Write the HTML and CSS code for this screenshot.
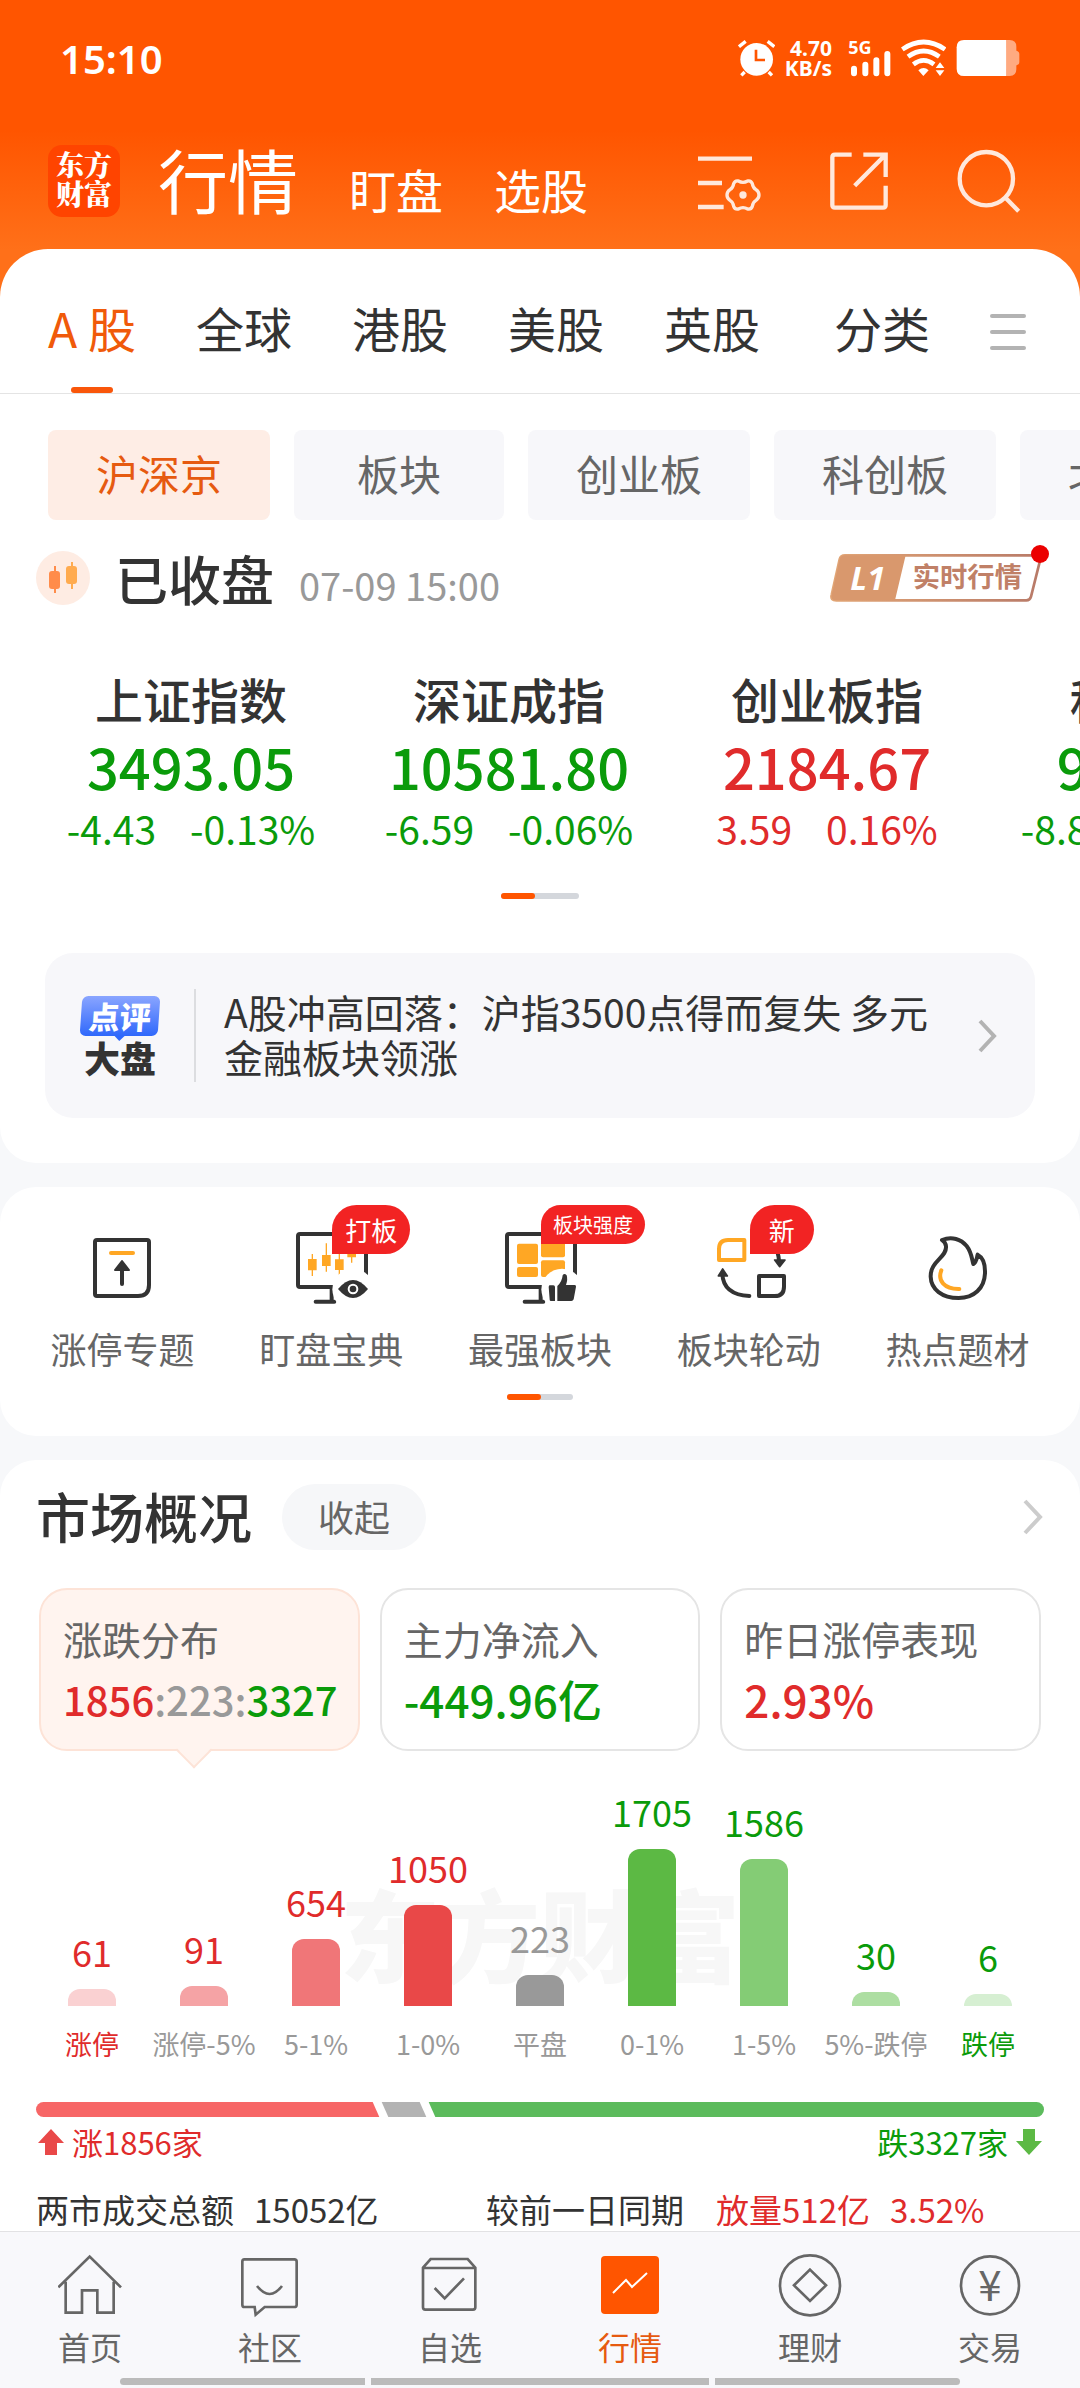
FILE: index.html
```html
<!DOCTYPE html>
<html lang="zh-CN">
<head>
    <meta charset="UTF-8">
    <meta name="viewport" content="width=device-width, initial-scale=1.0">
    <title>行情</title>
    <link rel="stylesheet" href="styles.css">
</head>
<body>
    <header class="header">
        <div class="status-bar">
            <div class="time">15:10</div>
            <div class="status-icons">
                <svg class="alarm" viewBox="174 120 111 114">
                    <circle cx="230" cy="181" r="49" fill="#fff"/>
                    <path d="M177 143l20-16M283 143l-20-16M194 219l-10 10M266 219l10 10" stroke="#fff" stroke-width="10" fill="none"/>
                    <path d="M228 152v31h27" stroke="#ff5500" stroke-width="8" fill="none"/>
                </svg>
                <div class="speed">4.70<br>KB/s</div>
                <svg class="signal" viewBox="510 120 129 114">
                    <text x="511" y="164" class="net-type">5G</text>
                    <path d="M528 209v14M562 197v26M595 184v39M628 165v58" stroke="#fff" stroke-width="18" stroke-linecap="round"/>
                </svg>
                <svg class="wifi" viewBox="669 120 135 114">
                    <g fill="none" stroke="#fff" stroke-width="14">
                        <path d="M673 151q64-44 128 0M690 173q47-34 94 0M706 196q31-24 62 0"/>
                    </g>
                    <path d="M721 214q16-14 31 0l-16 17zM773 207l13-17 13 17zM773 214l13 17 13-17z" fill="#fff"/>
                </svg>
                <svg class="battery" viewBox="830 120 192 114">
                    <path d="M981 123h10q20 0 20 20v12q9 2 9 10v24q0 8-9 10v12q0 20-20 20h-10z" fill="#ffaa80"/>
                    <path d="M981 123H854q-22 0-22 22v64q0 22 22 22h127z" fill="#fff"/>
                </svg>
            </div>
        </div>
        <div class="title-bar">
            <div class="logo">东方<br>财富</div>
            <nav class="title-nav">
                <a href="#" class="current">行情</a>
                <a href="#">盯盘</a>
                <a href="#">选股</a>
            </nav>
            <div class="tools">
                <button aria-label="设置">
                    <svg viewBox="54 441 192 192" fill="none" stroke="#ffe8dc" stroke-width="13">
                        <path d="M57 470h162M57 543h72M57 615h77"/>
                        <path d="M178 537q14 8 28 0 10-2 14 8 2 13 11 18 9 6 9 16t-9 16q-9 5-11 18-4 10-14 8-14-8-28 0-10 2-14-8-2-13-11-18-9-6-9-16t9-16q9-5 11-18 4-10 14-8z" stroke-width="10"/>
                        <circle cx="192" cy="579" r="11" fill="#ffe8dc" stroke="none"/>
                    </svg>
                </button>
                <button aria-label="分享">
                    <svg viewBox="438 446 192 192" fill="none" stroke="#ffe8dc" stroke-width="13">
                        <path d="M512 463h-50q-8 0-8 8v143q0 8 8 8h144q8 0 8-8v-58M547 463h67v67M612 465l-91 91"/>
                    </svg>
                </button>
                <button aria-label="搜索">
                    <svg viewBox="833 445 192 192" fill="none" stroke="#ffe8dc" stroke-width="13">
                        <circle cx="921" cy="534" r="80"/>
                        <path d="M977 590l41 42"/>
                    </svg>
                </button>
            </div>
        </div>
    </header>

    <main>
        <section class="panel market-panel">
            <div class="tab-bar">
                <nav class="tabs">
                    <a href="#" class="active">A 股</a>
                    <a href="#">全球</a>
                    <a href="#">港股</a>
                    <a href="#">美股</a>
                    <a href="#">英股</a>
                </nav>
                <a href="#" class="category">分类</a>
                <button class="menu" aria-label="菜单"><span></span><span></span><span></span></button>
            </div>

            <div class="chips">
                <button class="active">沪深京</button>
                <button>板块</button>
                <button>创业板</button>
                <button>科创板</button>
                <button>北交所</button>
            </div>

            <div class="session">
                <svg class="session-icon" viewBox="0 0 54 54">
                    <circle cx="27" cy="27" r="27" fill="#feece3"/>
                    <path d="M19 15v27" stroke="#ff8c4a" stroke-width="2"/>
                    <rect x="13" y="20" width="11" height="18" rx="3" fill="#ff8c4a"/>
                    <path d="M36 11v27" stroke="#ffab4f" stroke-width="2"/>
                    <rect x="30" y="15" width="11" height="18" rx="3" fill="#ffab4f"/>
                </svg>
                <h2>已收盘</h2>
                <span class="session-time">07-09 15:00</span>
                <a href="#" class="level-link">
                    <svg viewBox="30 42 663 177">
                        <defs>
                            <linearGradient id="bronze" x1="0" x2="1">
                                <stop offset="0" stop-color="#e2a676"/>
                                <stop offset="1" stop-color="#b87a68"/>
                            </linearGradient>
                        </defs>
                        <path d="M78 76H655q12 0 9 12L636 200q-3 11-14 11H52q-18 0-14-16L62 88q3-12 16-12z" fill="#fff" stroke="url(#bronze)" stroke-width="8"/>
                        <path d="M78 76H260L228 211H52q-18 0-14-16L62 88q3-12 16-12z" fill="#d9986d"/>
                        <text x="94" y="180" class="level-tag">L1</text>
                        <text x="281" y="172" class="level-text">实时行情</text>
                        <circle cx="663" cy="72" r="27" fill="#eb0000"/>
                    </svg>
                </a>
            </div>

            <div class="indices">
                <div class="index down">
                    <h3>上证指数</h3>
                    <div class="value">3493.05</div>
                    <div class="change"><span>-4.43</span><span>-0.13%</span></div>
                </div>
                <div class="index down">
                    <h3>深证成指</h3>
                    <div class="value">10581.80</div>
                    <div class="change"><span>-6.59</span><span>-0.06%</span></div>
                </div>
                <div class="index up">
                    <h3>创业板指</h3>
                    <div class="value">2184.67</div>
                    <div class="change"><span>3.59</span><span>0.16%</span></div>
                </div>
                <div class="index down">
                    <h3>科创50</h3>
                    <div class="value">984.95</div>
                    <div class="change"><span>-8.89</span><span>-0.89%</span></div>
                </div>
            </div>
            <div class="pager"><span></span></div>

            <a href="#" class="comment">
                <div class="comment-logo">
                    <span class="bubble">点评</span>
                    <span class="word">大盘</span>
                </div>
                <p>A股冲高回落：沪指3500点得而复失 多元金融板块领涨</p>
                <svg class="chevron" viewBox="0 0 22 36"><path d="M3 3l14 15L3 33"/></svg>
            </a>
        </section>

        <section class="panel quick-panel">
            <div class="quick-list">
                <a href="#" class="quick">
                    <div class="quick-icon">
                        <svg viewBox="0 0 80 80" fill="none" stroke="#333" stroke-width="4">
                            <path d="M15 13h50q2 0 2 2v43q0 11-11 11H15q-2 0-2-2V15q0-2 2-2z"/>
                            <path d="M29 26h22" stroke="#ffa724" stroke-linecap="round"/>
                            <path d="M40 57V38" stroke-linecap="round"/>
                            <path d="M40 34l7 9H33z" fill="#333" stroke-width="2" stroke-linejoin="round"/>
                        </svg>
                    </div>
                    <span>涨停专题</span>
                </a>
                <a href="#" class="quick">
                    <div class="quick-icon">
                        <svg viewBox="30 111 240 240">
                            <rect x="51" y="132" width="204" height="159" rx="6" fill="none" stroke="#333" stroke-width="12"/>
                            <path d="M104 335h56M152 291v44" stroke="#333" stroke-width="12" stroke-linecap="round"/>
                            <path d="M94 192v66M136 160v85M175 190v71M212 150v68" stroke="#ffa724" stroke-width="4"/>
                            <path d="M81 207h26v34H81zM123 195h26v33h-26zM162 208h26v32h-26zM199 170h26v32h-26z" fill="#ffa724"/>
                            <circle cx="216" cy="298" r="62" fill="#fff"/>
                            <path d="M171 297q45-54 90 0-45 54-90 0z" fill="#333"/>
                            <circle cx="216" cy="297" r="13" fill="#333" stroke="#fff" stroke-width="6"/>
                        </svg>
                        <span class="badge">打板</span>
                    </div>
                    <span>盯盘宝典</span>
                </a>
                <a href="#" class="quick">
                    <div class="quick-icon">
                        <svg viewBox="657 111 240 240">
                            <rect x="678" y="132" width="204" height="159" rx="6" fill="none" stroke="#333" stroke-width="12"/>
                            <path d="M731 335h56M779 291v44" stroke="#333" stroke-width="12" stroke-linecap="round"/>
                            <g fill="#ffa724">
                                <rect x="708" y="161" width="63" height="61" rx="6"/>
                                <rect x="780" y="150" width="72" height="52" rx="6"/>
                                <rect x="708" y="231" width="63" height="30" rx="6"/>
                                <rect x="780" y="211" width="72" height="50" rx="6"/>
                            </g>
                            <circle cx="843" cy="298" r="62" fill="#fff"/>
                            <path d="M805 286h12q5 0 5 5v42h-12q-4 0-4-4l-3-39zM829 333v-45q14-12 16-32 5-8 12 0 4 12-2 29h26q5 0 4 5l-7 38q-2 5-7 5z" fill="#333"/>
                        </svg>
                        <span class="badge small">板块强度</span>
                    </div>
                    <span>最强板块</span>
                </a>
                <a href="#" class="quick">
                    <div class="quick-icon">
                        <svg viewBox="84 111 240 240" fill="none" stroke="#333" stroke-width="12" stroke-linejoin="round">
                            <path d="M114 210v-33q0-27 27-27h49v60z" stroke="#ffa724"/>
                            <path d="M234 258h75v32q0 28-28 28h-47z"/>
                            <path d="M205 318q-78-4-81-66" stroke-linecap="round"/>
                            <path d="M125 237l14 21h-27zM296 230l-15-20h31z" fill="#333" stroke-width="5"/>
                            <path d="M282 170q10 16 12 42"/>
                        </svg>
                        <span class="badge single">新</span>
                    </div>
                    <span>板块轮动</span>
                </a>
                <a href="#" class="quick">
                    <div class="quick-icon">
                        <svg viewBox="711 111 240 240" fill="none" stroke="#333" stroke-width="12" stroke-linejoin="round" stroke-linecap="round">
                            <path d="M783 150c30-12 57-2 74 18 14 18 15 35 20 54 10-6 10-18 13-28 17 9 23 29 22 56-2 45-33 74-79 74-50 0-83-26-84-64-1-48 49-57 46-91-1-9-5-15-12-19z"/>
                            <path d="M781 241c-12 31 9 57 54 56" stroke="#ffa724"/>
                        </svg>
                    </div>
                    <span>热点题材</span>
                </a>
            </div>
            <div class="pager short"><span></span></div>
        </section>

        <section class="panel overview">
            <div class="overview-head">
                <h2>市场概况</h2>
                <button>收起</button>
                <svg class="chevron" viewBox="0 0 22 36"><path d="M3 2l15 16L3 34"/></svg>
            </div>

            <div class="cards">
                <div class="card active">
                    <div class="card-label">涨跌分布</div>
                    <div class="card-value ratio"><span class="up">1856</span><span class="flat">:223:</span><span class="down">3327</span></div>
                </div>
                <div class="card">
                    <div class="card-label">主力净流入</div>
                    <div class="card-value down">-449.96亿</div>
                </div>
                <div class="card">
                    <div class="card-label">昨日涨停表现</div>
                    <div class="card-value up">2.93%</div>
                </div>
            </div>

            <div class="chart">
                <div class="watermark">东方财富</div>
                <div class="col up"><b>61</b><i class="r1" style="height: 17px"></i><span>涨停</span></div>
                <div class="col up"><b>91</b><i class="r2" style="height: 20px"></i><span class="flat">涨停-5%</span></div>
                <div class="col up"><b>654</b><i class="r3" style="height: 67px"></i><span class="flat">5-1%</span></div>
                <div class="col up"><b>1050</b><i class="r4" style="height: 101px"></i><span class="flat">1-0%</span></div>
                <div class="col flat"><b>223</b><i class="g0" style="height: 31px"></i><span>平盘</span></div>
                <div class="col down"><b>1705</b><i class="g4" style="height: 157px"></i><span class="flat">0-1%</span></div>
                <div class="col down"><b>1586</b><i class="g3" style="height: 147px"></i><span class="flat">1-5%</span></div>
                <div class="col down"><b>30</b><i class="g2" style="height: 14px"></i><span class="flat">5%-跌停</span></div>
                <div class="col down"><b>6</b><i class="g1" style="height: 12px"></i><span>跌停</span></div>
            </div>

            <div class="ratio-bar">
                <span class="ratio-up" style="flex-grow: 1856"></span>
                <span class="ratio-flat"></span>
                <span class="ratio-down" style="flex-grow: 3327"></span>
            </div>
            <div class="ratio-text">
                <span class="up"><svg viewBox="0 0 26 26"><path d="M13 0l13 14h-7v12H7V14H0z" fill="#e94848"/></svg>涨1856家</span>
                <span class="down">跌3327家<svg viewBox="0 0 26 26"><path d="M13 26l13-14h-7V0H7v12H0z" fill="#5cb944"/></svg></span>
            </div>

            <div class="turnover">
                <div><span>两市成交总额</span><span>15052亿</span></div>
                <div><span class="wide">较前一日同期</span><span class="up">放量512亿</span><span class="up">3.52%</span></div>
            </div>
        </section>
    </main>

    <footer class="bottom">
        <nav class="bottom-nav">
            <a href="#">
                <svg viewBox="174 72 192 192"><path d="M175 172l94-92 94 92M197 155v93h49v-67h46v67h49v-93"/></svg>
                首页
            </a>
            <a href="#">
                <svg viewBox="714 72 192 192"><path d="M733 88h150q7 0 7 7v129q0 7-7 7h-89l-27 23-3-23h-31q-6 0-6-7V95q0-7 6-7z"/><path d="M771 168q38 48 75 0"/></svg>
                社区
            </a>
            <a href="#">
                <svg viewBox="1254 72 192 192"><path d="M1269 113l23-26h111l23 26v119q0 7-7 7h-143q-7 0-7-7zM1269 114h157M1304 174l30 31 58-60"/></svg>
                自选
            </a>
            <a href="#" class="active">
                <svg viewBox="0 0 64 64"><rect x="3" y="2" width="58" height="58" rx="4" fill="#ff5500" stroke="none"/><path d="M15 39l13-13 6 7 15-14" stroke="#fff" stroke-width="2"/></svg>
                行情
            </a>
            <a href="#">
                <svg viewBox="0 0 192 192"><circle cx="96" cy="94" r="90"/><path d="M96 47l48 47-48 47-48-47z"/></svg>
                理财
            </a>
            <a href="#">
                <svg viewBox="0 0 192 192"><circle cx="96" cy="94" r="87"/><text x="96" y="140" class="yen">¥</text></svg>
                交易
            </a>
        </nav>
        <div class="home-bar"><span></span><span class="mid"></span><span></span></div>
    </footer>
</body>
</html>
```
FILE: styles.css
```css
* {
    margin: 0;
    padding: 0;
    box-sizing: border-box;
}
body {
    display: flex;
    flex-direction: column;
    min-height: 100vh;
    overflow-x: hidden;
    font-family: "Noto Sans CJK SC", sans-serif;
    color: #333;
    background-color: #f7f8fa;
}
a {
    color: inherit;
    text-decoration: none;
}
button {
    font-family: inherit;
    color: inherit;
    background: none;
    border: none;
    cursor: pointer;
}
svg {
    display: block;
}
.up {
    color: #e02b2b;
}
.down {
    color: #0a9b0a;
}
.flat {
    color: #999;
}

/* 顶部 */
.header {
    padding-bottom: 48px;
    background: linear-gradient(#ff5500 130px, #ff7019 250px);
    color: #fff;
}
.status-bar {
    display: flex;
    justify-content: space-between;
    align-items: center;
    height: 116px;
    padding: 0 60px;
}
.time {
    font-family: "Noto Sans", sans-serif;
    font-size: 40px;
    font-weight: 600;
}
.status-icons {
    display: flex;
    align-items: center;
    gap: 10px;
}
.status-icons svg {
    height: 38px;
}
.alarm {
    width: 37px;
}
.speed {
    margin-right: 6px;
    font-family: "Noto Sans", sans-serif;
    font-size: 21px;
    line-height: 20px;
    font-weight: 700;
    text-align: right;
}
.signal {
    width: 43px;
}
.net-type {
    font-family: "Noto Sans", sans-serif;
    font-size: 54px;
    font-weight: 700;
    fill: #fff;
}
.wifi {
    width: 45px;
}
.battery {
    width: 64px;
}
.title-bar {
    display: flex;
    align-items: center;
    height: 133px;
    padding: 0 59px 3px 48px;
}
.logo {
    width: 72px;
    height: 72px;
    padding-top: 5px;
    border-radius: 14px;
    background-color: #ff4400;
    font-family: "Noto Serif CJK SC", "Noto Sans CJK SC", serif;
    font-size: 28px;
    line-height: 29px;
    font-weight: 900;
    text-align: center;
}
.title-nav {
    display: flex;
    align-items: baseline;
    gap: 51px;
    margin-left: 38px;
    font-size: 47px;
}
.title-nav .current {
    font-size: 70px;
    line-height: 80px;
}
.tools {
    display: flex;
    gap: 66px;
    margin-left: auto;
}
.tools svg {
    width: 64px;
    height: 64px;
}

/* 行情面板 */
.panel {
    margin-bottom: 24px;
    border-radius: 36px;
    background-color: #fff;
    overflow: hidden;
}
.market-panel {
    margin-top: -48px;
    padding-bottom: 45px;
    border-radius: 48px 48px 36px 36px;
}
.tab-bar {
    display: flex;
    align-items: center;
    height: 145px;
    padding: 0 54px 0 48px;
    border-bottom: 1px solid #e4e4e4;
    font-size: 48px;
}
.tabs {
    display: flex;
    gap: 60px;
}
.tabs a,
.tab-bar .category {
    position: relative;
    padding: 20px 0 8px;
    line-height: 116px;
    white-space: nowrap;
}
.tab-bar .category {
    margin-left: auto;
}
.tabs .active {
    color: #f05a0a;
}
.tabs .active::after {
    content: "";
    position: absolute;
    left: 50%;
    bottom: 0;
    width: 42px;
    height: 6px;
    margin-left: -21px;
    border-radius: 3px;
    background-color: #f9560a;
}
.menu {
    display: flex;
    flex-direction: column;
    gap: 12px;
    width: 36px;
    margin: 22px 0 0 60px;
}
.menu span {
    height: 4px;
    border-radius: 2px;
    background-color: #b3b3b3;
}
.chips {
    display: flex;
    gap: 24px;
    padding: 36px 0 0 48px;
    overflow: hidden;
}
.chips button {
    flex-shrink: 0;
    min-width: 210px;
    height: 90px;
    padding: 0 48px 5px;
    border-radius: 8px;
    background-color: #f7f7fa;
    font-size: 42px;
    color: #666;
}
.chips .active {
    background-color: #feede5;
    color: #e65a10;
}
.session {
    display: flex;
    align-items: center;
    height: 54px;
    margin-top: 31px;
    padding: 0 30px 0 36px;
}
.session-icon {
    width: 54px;
    height: 54px;
}
.session h2 {
    margin-left: 25px;
    font-size: 53px;
    font-weight: 500;
}
.session-time {
    margin: 12px 0 0 25px;
    font-size: 38px;
    color: #999;
}
.level-link {
    margin: 0 0 9px auto;
}
.level-link svg {
    width: 221px;
    height: 59px;
}
.level-tag {
    font-family: "Open Sans", sans-serif;
    font-size: 98px;
    font-weight: 700;
    font-style: italic;
    fill: #fff;
}
.level-text {
    font-size: 82px;
    font-weight: 700;
    fill: #c08067;
}
.indices {
    display: flex;
    margin: 63px 0 0 32px;
    overflow: hidden;
}
.index {
    display: flex;
    flex-direction: column;
    flex: 0 0 318px;
    align-items: center;
    gap: 6px;
}
.index h3 {
    font-size: 48px;
    line-height: 60px;
    font-weight: 500;
    color: #333;
}
.value {
    font-size: 56px;
    line-height: 64px;
    font-weight: 500;
}
.change {
    display: flex;
    gap: 34px;
    font-size: 39px;
    line-height: 48px;
}
.pager {
    width: 78px;
    height: 6px;
    margin: 41px auto 0;
    border-radius: 3px;
    background-color: #d4d7dc;
}
.pager span {
    display: block;
    width: 34px;
    height: 6px;
    border-radius: 3px;
    background-color: #ff5500;
}
.pager.short {
    width: 66px;
    margin-top: 22px;
}
.comment {
    display: flex;
    align-items: center;
    margin: 54px 45px 0;
    padding: 36px 36px 36px 34px;
    border-radius: 28px;
    background-color: #f7f7fa;
}
.comment-logo {
    display: flex;
    flex-direction: column;
    flex-shrink: 0;
    width: 82px;
    height: 80px;
    text-align: center;
    font-weight: 900;
}
.bubble {
    position: relative;
    margin: 0 2px 6px;
    border-radius: 6px;
    background: linear-gradient(#8aa5ff, #2f68fb);
    font-size: 31px;
    line-height: 40px;
    color: #fff;
    transform: skewX(-4deg);
}
.bubble::after {
    content: "";
    position: absolute;
    left: 35px;
    top: 40px;
    border: 5px solid transparent;
    border-top-color: #2f68fb;
}
.word {
    font-size: 36px;
    line-height: 30px;
}
.comment p {
    flex: 1;
    margin-left: 33px;
    padding: 0 28px 3px 28px;
    border-left: 2px solid #dcdde0;
    font-size: 39px;
    line-height: 45px;
}
.chevron {
    flex-shrink: 0;
    width: 22px;
    height: 36px;
    fill: none;
    stroke: #b3b3b3;
    stroke-width: 4;
}

/* 快捷入口 */
.quick-panel {
    padding: 40px 18px 36px;
}
.quick-list {
    display: grid;
    grid-template-columns: repeat(5, 1fr);
}
.quick {
    display: flex;
    flex-direction: column;
    align-items: center;
    gap: 17px;
    font-size: 36px;
    line-height: 48px;
    color: #666;
}
.quick-icon {
    position: relative;
    width: 80px;
    height: 80px;
}
.badge {
    position: absolute;
    left: 41px;
    top: -22px;
    padding: 0 13px;
    border-radius: 25px 25px 25px 0;
    background-color: #f22323;
    font-size: 26px;
    line-height: 49px;
    color: #fff;
    white-space: nowrap;
}
.badge.small {
    padding: 0 12px;
    font-size: 20px;
    line-height: 39px;
}
.badge.single {
    padding: 0 19px;
}

/* 市场概况 */
.overview {
    margin-bottom: 0;
    padding: 24px 36px 4px;
    border-radius: 36px 36px 0 0;
}
.overview-head {
    display: flex;
    align-items: center;
    height: 66px;
}
.overview-head h2 {
    padding-bottom: 4px;
    font-size: 54px;
    font-weight: 500;
}
.overview-head button {
    width: 144px;
    height: 66px;
    padding-bottom: 3px;
    margin-left: 30px;
    border-radius: 33px;
    background-color: #f6f7f9;
    font-size: 36px;
    color: #666;
}
.overview-head .chevron {
    margin-left: auto;
    stroke: #ccc;
}
.cards {
    display: grid;
    grid-template-columns: repeat(3, 1fr);
    gap: 20px;
    margin: 38px 3px 0;
}
.card {
    position: relative;
    padding: 23px 0 22px 22px;
    border: 2px solid #e5e5e5;
    border-radius: 28px;
    white-space: nowrap;
}
.card.active {
    border-color: #fde3d7;
    background-color: #fff4ef;
}
.card.active::after {
    content: "";
    position: absolute;
    left: 140px;
    bottom: -14px;
    width: 24px;
    height: 24px;
    border: solid #fde3d7;
    border-width: 0 2px 2px 0;
    background: linear-gradient(135deg, transparent 50%, #fff4ef 50%);
    transform: rotate(45deg);
}
.card-label {
    font-size: 39px;
    line-height: 50px;
    color: #666;
}
.card-value {
    margin-top: 8px;
    font-size: 44px;
    line-height: 56px;
    font-weight: 500;
}
.card-value.ratio {
    font-size: 40px;
}
.chart {
    position: relative;
    display: grid;
    grid-template-columns: repeat(9, 1fr);
    align-items: end;
    margin-top: 40px;
}
.watermark {
    position: absolute;
    left: 50%;
    bottom: 74px;
    transform: translateX(-50%);
    font-size: 100px;
    line-height: 112px;
    font-weight: 900;
    color: #f7f7f7;
    white-space: nowrap;
}
.col {
    position: relative;
    display: flex;
    flex-direction: column;
    align-items: center;
}
.col b {
    margin-bottom: 18px;
    font-size: 36px;
    line-height: 40px;
    font-weight: 400;
}
.col i {
    width: 48px;
    border-radius: 12px 12px 0 0;
}
.col span {
    margin-top: 20px;
    font-size: 27px;
    line-height: 36px;
    white-space: nowrap;
}
.r1 { background-color: #fad1d2; }
.r2 { background-color: #f5a3a5; }
.r3 { background-color: #f07678; }
.r4 { background-color: #e94848; }
.g0 { background-color: #999; }
.g1 { background-color: #d6efd2; }
.g2 { background-color: #addea2; }
.g3 { background-color: #84cc75; }
.g4 { background-color: #5cb944; }
.ratio-bar {
    display: flex;
    gap: 9px;
    height: 15px;
    margin-top: 40px;
    border-radius: 8px;
    overflow: hidden;
}
.ratio-bar span {
    transform: skewX(24deg);
}
.ratio-up {
    margin-left: -8px;
    background-color: #f76666;
}
.ratio-flat {
    flex: 0 0 38px;
    background-color: #b3b3b3;
}
.ratio-down {
    margin-right: -12px;
    background-color: #5cbb5c;
}
.ratio-text {
    display: flex;
    justify-content: space-between;
    margin-top: 5px;
    font-size: 31px;
    line-height: 40px;
}
.ratio-text span {
    display: flex;
    align-items: center;
    gap: 8px;
    padding: 0 2px;
}
.ratio-text svg {
    width: 26px;
    height: 26px;
}
.turnover {
    display: grid;
    grid-template-columns: 450px 1fr;
    margin-top: 29px;
    font-size: 33px;
    line-height: 36px;
    white-space: nowrap;
}
.turnover div {
    display: flex;
    gap: 20px;
}
.turnover .wide {
    margin-right: 12px;
}

/* 底部导航 */
.bottom {
    position: sticky;
    bottom: 0;
    margin-top: auto;
    padding: 22px 0 3px;
    border-top: 1px solid #e2e2e4;
    background-color: #f8f8fb;
}
.bottom-nav {
    display: grid;
    grid-template-columns: repeat(6, 1fr);
}
.bottom-nav a {
    display: flex;
    flex-direction: column;
    align-items: center;
    gap: 8px;
    font-size: 32px;
    line-height: 40px;
    color: #666;
}
.bottom-nav .active {
    color: #e65a10;
}
.bottom-nav svg {
    width: 64px;
    height: 64px;
    fill: none;
    stroke: #666;
    stroke-width: 8;
}
.bottom-nav .yen {
    font-size: 126px;
    text-anchor: middle;
    fill: #666;
    stroke: none;
}
.home-bar {
    display: flex;
    gap: 6px;
    margin: 12px 120px 0;
}
.home-bar span {
    flex: 245;
    height: 7px;
    background-color: #bbb;
}
.home-bar span:first-child {
    border-radius: 4px 0 0 4px;
}
.home-bar span:last-child {
    border-radius: 0 4px 4px 0;
}
.home-bar .mid {
    flex: 338;
}
```
